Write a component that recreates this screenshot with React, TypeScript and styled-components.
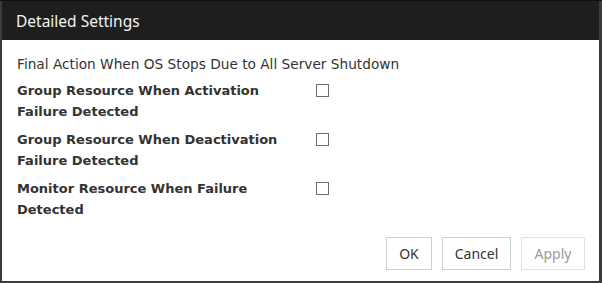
import React from 'react';
import styled, { createGlobalStyle } from 'styled-components';

const GlobalStyle = createGlobalStyle`
  html, body {
    margin: 0;
    padding: 0;
    background: #3b3b3b;
    font-family: "Noto Sans", "Open Sans", sans-serif;
  }
`;

const Backdrop = styled.div`
  width: 602px;
  height: 283px;
  padding: 1px 3px 2px 2px;
  box-sizing: border-box;
  background: linear-gradient(#111 0 1px, #3b3b3b 1px);
`;

const Dialog = styled.div`
  width: 597px;
  height: 280px;
  background: #fff;
  display: flex;
  flex-direction: column;
`;

const Header = styled.div`
  height: 39px;
  flex: none;
  background: #1e1e1e;
  color: #f2f2f2;
  font-size: 15.5px;
  display: flex;
  align-items: center;
  padding-left: 14px;
`;

const Body = styled.div`
  flex: 1;
  display: flex;
  flex-direction: column;
  padding: 14px 14px 11px 15px;
  color: #333;
  font-family: "DejaVu Sans", Verdana, sans-serif;
`;

const Caption = styled.div`
  font-size: 13.7px;
  line-height: 20px;
  margin-bottom: 6px;
  white-space: nowrap;
`;

const Row = styled.div`
  display: grid;
  grid-template-columns: 283px 13px;
  column-gap: 16px;
  margin-bottom: 7px;
`;

const Label = styled.div`
  font-size: 13px;
  font-weight: bold;
  line-height: 21px;
  white-space: nowrap;
`;

const Check = styled.input.attrs({ type: 'checkbox' })`
  appearance: none;
  margin: 4px 0 0;
  width: 13px;
  height: 13px;
  box-sizing: border-box;
  border: 1px solid #6e6e6e;
  background: #fff;
`;

const Footer = styled.div`
  margin-top: auto;
  display: flex;
  justify-content: flex-end;
  gap: 10px;
  font-family: "Noto Sans", sans-serif;
`;

const Button = styled.button<{ $disabled?: boolean; $w: number }>`
  width: ${(p) => p.$w}px;
  height: 33px;
  background: #fff;
  border: 1px solid ${(p) => (p.$disabled ? '#e0e0e0' : '#cfcfcf')};
  color: ${(p) => (p.$disabled ? '#9a9a9a' : '#333')};
  font-family: inherit;
  font-size: 14px;
  padding: 0;
`;

const rows = [
  ['Group Resource When Activation', 'Failure Detected'],
  ['Group Resource When Deactivation', 'Failure Detected'],
  ['Monitor Resource When Failure', 'Detected'],
];

export default function App() {
  return (
    <Backdrop>
      <GlobalStyle />
      <Dialog>
        <Header>Detailed Settings</Header>
        <Body>
          <Caption>Final Action When OS Stops Due to All Server Shutdown</Caption>
          {rows.map(([a, b]) => (
            <Row key={a}>
              <Label>
                {a}
                <br />
                {b}
              </Label>
              <Check />
            </Row>
          ))}
          <Footer>
            <Button $w={46}>OK</Button>
            <Button $w={69}>Cancel</Button>
            <Button $w={64} $disabled>Apply</Button>
          </Footer>
        </Body>
      </Dialog>
    </Backdrop>
  );
}
